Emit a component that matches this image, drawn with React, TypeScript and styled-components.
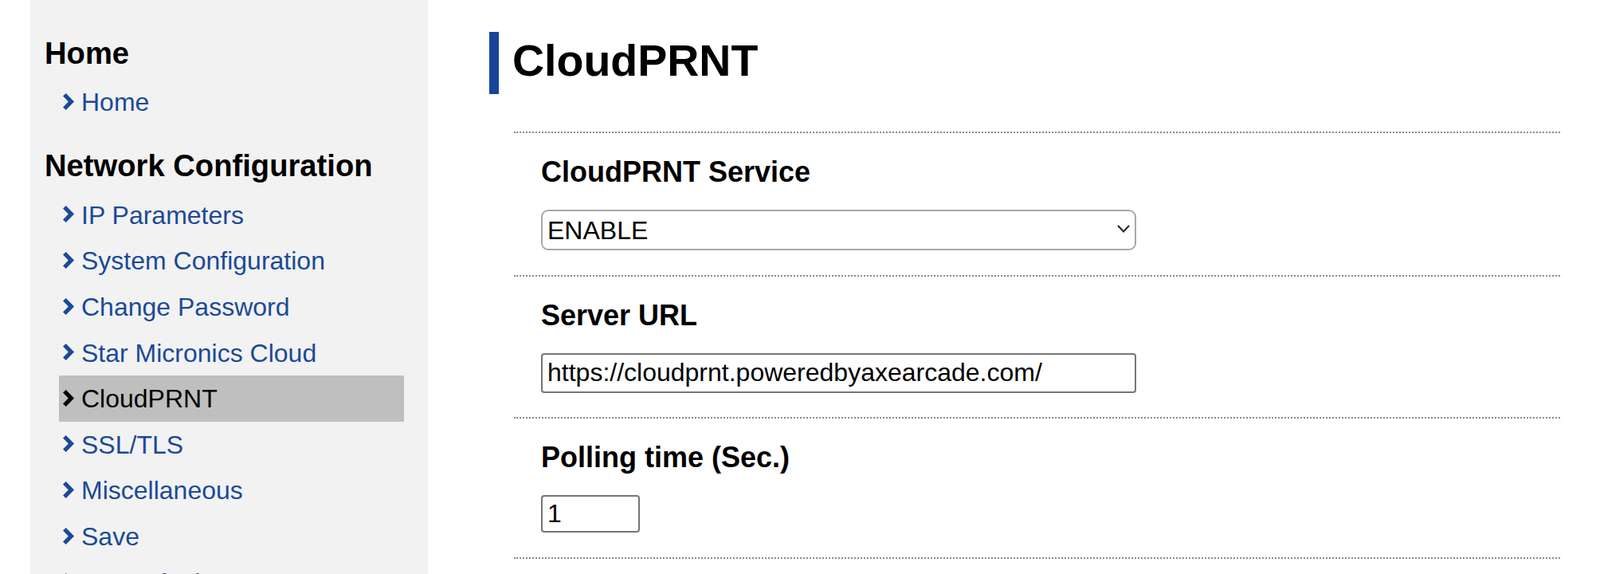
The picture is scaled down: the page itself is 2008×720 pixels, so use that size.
import React from "react";
import styled, { createGlobalStyle } from "styled-components";

const GlobalStyle = createGlobalStyle`
  html, body {
    margin: 0;
    padding: 0;
    overflow: hidden;
    background: #ffffff;
  }
  body {
    font-family: "Liberation Sans", Arial, Helvetica, sans-serif;
    color: #000000;
  }
  * { box-sizing: border-box; }
`;

const Page = styled.div`
  display: flex;
  align-items: stretch;
  min-height: 720px;
  padding-left: 38px;
`;

const Sidebar = styled.nav`
  flex: 0 0 499px;
  background: #f2f2f2;
  padding: 15px 30px 0 18px;
`;

const GroupTitle = styled.h2`
  margin: 29.5px 0 10.5px;
  font-size: 38.2px;
  font-weight: bold;
  line-height: normal;
  color: #000;
`;

const NavList = styled.ul`
  list-style: none;
  margin: 0 0 0 18px;
  padding: 0;
`;

const NavItem = styled.li<{ $active?: boolean }>`
  display: flex;
  align-items: center;
  gap: 8px;
  height: 57.6px;
  padding-left: 5px;
  font-size: 32px;
  color: ${(p) => (p.$active ? "#000000" : "#1b4a97")};
  background: ${(p) => (p.$active ? "#bfbfbf" : "transparent")};
  cursor: pointer;
`;

const NavText = styled.span`
  line-height: normal;
  white-space: nowrap;
  padding-top: 2px;
`;

const Chevron = styled.svg`
  flex: 0 0 auto;
  width: 15px;
  height: 21px;
  margin-bottom: 1px;
`;

const Main = styled.main`
  flex: 1;
  padding: 40px 50px 0 77px;
`;

const Title = styled.h1`
  margin: 0;
  font-size: 55.5px;
  font-weight: bold;
  line-height: normal;
  border-left: 12px solid #16449a;
  padding: 4px 0 10px 17px;
`;

const Form = styled.div`
  margin: 47px 0 0 31px;
`;

const Section = styled.section`
  border-top: 2px dotted #8a8a8a;
  padding: 28px 0 30.5px 34px;
`;

const Label = styled.div`
  font-size: 36px;
  font-weight: bold;
  line-height: normal;
  margin-bottom: 26px;
`;

const SelectWrap = styled.div`
  position: relative;
  width: 747px;
  height: 51px;
`;

const Select = styled.select`
  appearance: none;
  -webkit-appearance: none;
  width: 100%;
  height: 100%;
  border: 2px solid #a8a8a8;
  border-radius: 9px;
  background: #ffffff;
  padding: 0 40px 0 6px;
  font-family: "Liberation Sans", Arial, Helvetica, sans-serif;
  font-size: 32px;
  color: #000;
  outline: none;
`;

const SelectArrow = styled.svg`
  position: absolute;
  right: 8px;
  top: 19px;
  width: 16px;
  height: 10px;
  pointer-events: none;
`;

const TextInput = styled.input<{ $width: number; $height: number }>`
  display: block;
  width: ${(p) => p.$width}px;
  height: ${(p) => p.$height}px;
  border: 2px solid #767676;
  border-radius: 4px;
  padding: 0 6px;
  font-family: "Liberation Sans", Arial, Helvetica, sans-serif;
  font-size: 32px;
  color: #000;
  background: #fff;
  outline: none;
`;

const groups = [
  { title: "Home", items: ["Home"] },
  {
    title: "Network Configuration",
    items: [
      "IP Parameters",
      "System Configuration",
      "Change Password",
      "Star Micronics Cloud",
      "CloudPRNT",
      "SSL/TLS",
      "Miscellaneous",
      "Save",
      "Set Default",
    ],
  },
];

const ChevronIcon = () => (
  <Chevron viewBox="0 0 15 21">
    <polygon points="0,3.6 3.8,0 14,10.5 3.8,21 0,17.4 6.8,10.5" fill="currentColor" />
  </Chevron>
);

export default function App() {
  return (
    <>
      <GlobalStyle />
      <Page>
        <Sidebar>
          {groups.map((g) => (
            <React.Fragment key={g.title}>
              <GroupTitle>{g.title}</GroupTitle>
              <NavList>
                {g.items.map((it) => (
                  <NavItem key={it} $active={it === "CloudPRNT"}>
                    <ChevronIcon />
                    <NavText>{it}</NavText>
                  </NavItem>
                ))}
              </NavList>
            </React.Fragment>
          ))}
        </Sidebar>
        <Main>
          <Title>CloudPRNT</Title>
          <Form>
            <Section>
              <Label>CloudPRNT Service</Label>
              <SelectWrap>
                <Select defaultValue="ENABLE">
                  <option value="ENABLE">ENABLE</option>
                  <option value="DISABLE">DISABLE</option>
                </Select>
                <SelectArrow viewBox="0 0 16 10">
                  <polyline points="1,1 8,8.5 15,1" fill="none" stroke="#222" strokeWidth="2" />
                </SelectArrow>
              </SelectWrap>
            </Section>
            <Section>
              <Label>Server URL</Label>
              <TextInput
                $width={747}
                $height={50}
                type="text"
                defaultValue="https://cloudprnt.poweredbyaxearcade.com/"
              />
            </Section>
            <Section>
              <Label>Polling time (Sec.)</Label>
              <TextInput $width={124} $height={47} type="text" defaultValue="1" />
            </Section>
            <Section />
          </Form>
        </Main>
      </Page>
    </>
  );
}
